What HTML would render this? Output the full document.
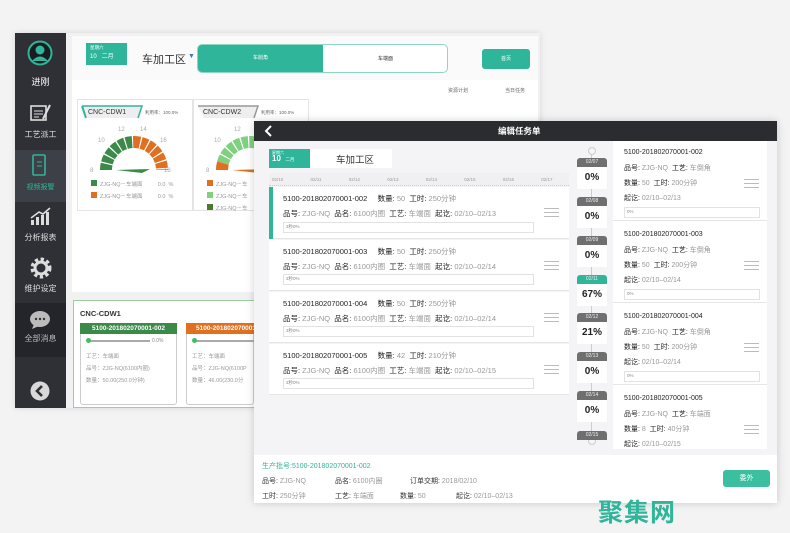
<!DOCTYPE html>
<html><head><meta charset="utf-8">
<style>
*{margin:0;padding:0;box-sizing:border-box}
body{width:790px;height:533px;background:#f3f3f4;font-family:"Liberation Sans","Noto Sans CJK SC",sans-serif;position:relative;overflow:hidden;color:#333}
.a{position:absolute}
.t{position:absolute;white-space:nowrap}
.sb{left:15px;top:33px;width:51px;height:375px;background:#2e3036}
.si{position:absolute;left:0;width:51px;text-align:center;color:#ddd;font-size:8px}
.card{position:absolute;left:269px;width:300px;background:#fff;border-bottom:1px solid #e6e6e6}
.card .l1{position:absolute;left:14px;top:6px;font-size:7.5px;color:#222}
.card .l2{position:absolute;left:14px;top:21px;font-size:7.5px;color:#222}
.g{color:#999}
.bar{position:absolute;border:1px solid #e2e2e2;background:#fff;font-size:4.5px;color:#888;padding:1px 2px}
.menu{position:absolute;width:15px;height:9px;border-top:1px solid #bbb;border-bottom:1px solid #bbb}
.menu:after{content:"";position:absolute;left:0;right:0;top:3px;border-top:1px solid #bbb}
.pill{position:absolute;left:577px;width:30px;height:9px;background:#6f6f6f;color:#eee;font-size:5px;text-align:center;line-height:9px;border-radius:3px 3px 0 0}
.pct{position:absolute;left:577px;width:30px;height:22px;background:#fff;font-size:10px;font-weight:bold;text-align:center;line-height:22px;color:#222}
.ri{position:absolute;left:613px;width:154px;background:#fff;border-bottom:1px solid #e6e6e6;height:78px}
.ri div.t{left:11px;font-size:7px;color:#222}
</style></head><body>

<!-- back panel -->
<div class="a" style="left:15px;top:33px;width:525px;height:375px;background:#f1f1f2;box-shadow:0 0 6px rgba(0,0,0,.12)"></div>
<div class="a sb"></div>
<div class="a" style="left:15px;top:150px;width:51px;height:52px;background:#3d4047"></div>
<div class="a" style="left:15px;top:303px;width:51px;height:54px;background:#23252a"></div>
<svg class="a" style="left:27px;top:40px" width="26" height="26"><circle cx="13" cy="13" r="11.5" fill="#1a1c20" stroke="#2fb59a" stroke-width="2"/><circle cx="13" cy="10" r="4.5" fill="#2fb59a"/><path d="M5 21 Q13 12 21 21" fill="#2fb59a"/></svg>
<div class="si" style="left:15px;top:75px;font-size:9px;color:#fff">进刚</div>
<svg class="a" style="left:30px;top:103px" width="22" height="20"><rect x="1" y="3" width="15" height="14" fill="none" stroke="#ddd" stroke-width="1.6"/><path d="M4 8h9M4 11h9M4 14h5" stroke="#ddd"/><path d="M13 16 L20 2" stroke="#ddd" stroke-width="2"/></svg>
<div class="si" style="left:15px;top:129px">工艺派工</div>
<svg class="a" style="left:32px;top:154px" width="16" height="24"><rect x="1" y="1" width="12" height="20" rx="1" fill="none" stroke="#2fb59a" stroke-width="1.6"/><path d="M5 8h5M5 12h5" stroke="#2fb59a"/></svg>
<div class="si" style="left:15px;top:182px;color:#2fb59a;font-size:7px">视频报警</div>
<svg class="a" style="left:29px;top:207px" width="24" height="20"><path d="M2 18V13h3v5zM7 18V10h3v8zM12 18V8h3v10zM17 18V5h3v13z" fill="#ddd"/><path d="M2 11 L10 5 L14 7 L21 1" stroke="#ddd" stroke-width="1.6" fill="none"/></svg>
<div class="si" style="left:15px;top:232px">分析报表</div>
<svg class="a" style="left:29px;top:256px" width="24" height="24"><circle cx="12" cy="12" r="8" fill="none" stroke="#ddd" stroke-width="5" stroke-dasharray="3 2.3"/><circle cx="12" cy="12" r="6" fill="none" stroke="#ddd" stroke-width="3"/></svg>
<div class="si" style="left:15px;top:283px">维护设定</div>
<svg class="a" style="left:29px;top:310px" width="22" height="20"><ellipse cx="11" cy="9" rx="10" ry="8" fill="#bbb"/><path d="M5 14 L3 19 L10 16z" fill="#bbb"/><circle cx="7" cy="9" r="1.2" fill="#333"/><circle cx="11" cy="9" r="1.2" fill="#333"/><circle cx="15" cy="9" r="1.2" fill="#333"/></svg>
<div class="si" style="left:15px;top:333px;color:#bbb">全部消息</div>
<svg class="a" style="left:30px;top:381px" width="20" height="20"><circle cx="10" cy="10" r="9.5" fill="#d8d8d8"/><path d="M12 5 L7 10 L12 15" stroke="#2e3036" stroke-width="2.6" fill="none"/></svg>

<!-- back top bar -->
<div class="a" style="left:72px;top:36px;width:466px;height:44px;background:#fafafa"></div>
<div class="a" style="left:86px;top:43px;width:41px;height:22px;background:#2fb59a;color:#fff;font-size:4.5px;padding:2px 4px">星期六<br><span style="font-size:6px">10 &nbsp; 二月</span></div>
<div class="t" style="left:142px;top:51px;font-size:11px">车加工区</div>
<div class="t" style="left:188px;top:53px;font-size:7px;color:#3a7bb0">▼</div>
<div class="a" style="left:197px;top:44px;width:251px;height:29px;border:1px solid #8fd5c4;border-radius:5px;background:#fff;overflow:hidden"><div style="width:125px;height:100%;background:#2fb59a;color:#fff;font-size:5px;text-align:center;line-height:27px">车削角</div><div class="t" style="left:180px;top:10px;font-size:5px">车端面</div></div>
<div class="a" style="left:482px;top:49px;width:48px;height:20px;background:#2fb59a;border-radius:3px;color:#fff;font-size:5px;text-align:center;line-height:20px">首页</div>
<div class="a" style="left:72px;top:80px;width:466px;height:212px;background:#fff"></div>
<div class="t" style="left:448px;top:87px;font-size:5px;color:#666">资源计划</div>
<div class="t" style="left:505px;top:87px;font-size:5px;color:#666">当日任务</div>
<!-- gauge cards -->
<div class="a" style="left:77px;top:99px;width:116px;height:112px;border:1px solid #e4e4e4;background:#fff"></div>
<div class="a" style="left:193px;top:99px;width:116px;height:112px;border:1px solid #e4e4e4;background:#fff"></div>
<svg class="a" style="left:80px;top:104px" width="64" height="16"><path d="M2 2 L62 2 L58 14 L8 14z" fill="#eee"/><path d="M2 2 L6 14" stroke="#2fb59a" stroke-width="2"/><path d="M2 2 L62 2 L58 14" stroke="#2fb59a" stroke-width="1.5" fill="none"/></svg>
<div class="t" style="left:88px;top:109px;font-size:7px;color:#333">CNC-CDW1</div>
<div class="t" style="left:145px;top:110px;font-size:4.5px;color:#666">利用率：100.0%</div>
<svg class="a" style="left:196px;top:104px" width="64" height="16"><path d="M2 2 L62 2 L58 14 L8 14z" fill="#eee"/><path d="M2 2 L62 2 L58 14" stroke="#999" stroke-width="1.5" fill="none"/></svg>
<div class="t" style="left:203px;top:109px;font-size:7px;color:#333">CNC-CDW2</div>
<div class="t" style="left:261px;top:110px;font-size:4.5px;color:#666">利用率：100.0%</div>
<svg class="a" style="left:80px;top:118px" width="110" height="60">
<text x="38" y="13" font-size="6" fill="#aaa">12</text><text x="60" y="13" font-size="6" fill="#aaa">14</text><text x="18" y="24" font-size="6" fill="#aaa">10</text><text x="80" y="24" font-size="6" fill="#aaa">16</text><text x="10" y="54" font-size="6" fill="#aaa">8</text><text x="84" y="54" font-size="6" fill="#aaa">18</text>
<path d="M26 52 A28 28 0 0 1 54 24" fill="none" stroke="#3c8a4a" stroke-width="12" stroke-dasharray="6 1.2"/>
<path d="M54 24 A28 28 0 0 1 82 52" fill="none" stroke="#e07020" stroke-width="12" stroke-dasharray="6 1.2"/>
<path d="M36 52 L70 51 L62 55z" fill="#3c8a4a"/>
</svg>
<svg class="a" style="left:196px;top:118px" width="110" height="60">
<text x="38" y="13" font-size="6" fill="#aaa">12</text><text x="18" y="24" font-size="6" fill="#aaa">10</text><text x="10" y="54" font-size="6" fill="#aaa">8</text>
<path d="M26 52 A28 28 0 0 1 82 52" fill="none" stroke="#7fd07f" stroke-width="12" stroke-dasharray="6 1.2"/>
<path d="M26 52 A28 28 0 0 1 27 45" fill="none" stroke="#e07020" stroke-width="12"/>
<path d="M36 52 L70 51 L62 55z" fill="#e07020"/>
</svg>
<div class="a" style="left:91px;top:180px;width:6px;height:6px;background:#3c8a4a"></div><div class="t" style="left:100px;top:180px;font-size:5.5px;color:#999">ZJG-NQ－车端面 &nbsp;&nbsp;&nbsp;&nbsp;&nbsp;&nbsp;&nbsp;&nbsp;&nbsp;0.0 &nbsp;%</div>
<div class="a" style="left:91px;top:192px;width:6px;height:6px;background:#e07020"></div><div class="t" style="left:100px;top:192px;font-size:5.5px;color:#999">ZJG-NQ－车端面 &nbsp;&nbsp;&nbsp;&nbsp;&nbsp;&nbsp;&nbsp;&nbsp;&nbsp;0.0 &nbsp;%</div>
<div class="a" style="left:207px;top:180px;width:6px;height:6px;background:#e07020"></div><div class="t" style="left:216px;top:180px;font-size:5.5px;color:#999">ZJG-NQ－车</div>
<div class="a" style="left:207px;top:192px;width:6px;height:6px;background:#7fd07f"></div><div class="t" style="left:216px;top:192px;font-size:5.5px;color:#999">ZJG-NQ－车</div>
<div class="a" style="left:207px;top:204px;width:6px;height:6px;background:#4a7a2a"></div><div class="t" style="left:216px;top:204px;font-size:5.5px;color:#999">ZJG-NQ－车</div>
<!-- bottom card -->
<div class="a" style="left:73px;top:300px;width:190px;height:108px;border:1px solid #9ccfa0;background:#fff"></div>
<div class="t" style="left:80px;top:309px;font-size:7.5px;font-weight:bold;color:#333">CNC-CDW1</div>
<div class="a" style="left:80px;top:323px;width:97px;height:82px;border:1px solid #ccc;border-radius:3px"></div>
<div class="a" style="left:80px;top:323px;width:97px;height:11px;background:#3c8a4a;color:#fff;font-size:6.5px;font-weight:bold;text-align:center;line-height:11px">5100-201802070001-002</div>
<div class="a" style="left:186px;top:323px;width:68px;height:82px;border:1px solid #ccc;border-radius:3px"></div>
<div class="a" style="left:186px;top:323px;width:68px;height:11px;background:#e07020;color:#fff;font-size:6.5px;font-weight:bold;line-height:11px;padding-left:10px;overflow:hidden;white-space:nowrap">5100-201802070001</div>
<div class="a" style="left:88px;top:340px;width:62px;height:2px;background:#aaa"></div><div class="a" style="left:86px;top:338px;width:5px;height:5px;border-radius:50%;background:#3fc060"></div><div class="t" style="left:152px;top:338px;font-size:5px;color:#888">0.0%</div>
<div class="a" style="left:194px;top:340px;width:60px;height:2px;background:#aaa"></div><div class="a" style="left:192px;top:338px;width:5px;height:5px;border-radius:50%;background:#3fc060"></div>
<div class="t" style="left:86px;top:351px;font-size:5.5px;color:#999;line-height:12px">工艺：车端面<br>品号：ZJG-NQ(6100内圈)<br>数量：50.00(250.0分钟)</div>
<div class="t" style="left:192px;top:351px;font-size:5.5px;color:#999;line-height:12px">工艺：车端面<br>品号：ZJG-NQ(6100P<br>数量：46.00(230.0分</div>

<!-- front panel -->
<div class="a" style="left:254px;top:121px;width:523px;height:382px;background:#f4f4f6;box-shadow:0 0 8px rgba(0,0,0,.18)"></div>
<div class="a" style="left:254px;top:121px;width:523px;height:20px;background:#2b2c30"></div>
<svg class="a" style="left:263px;top:124px" width="10" height="14"><path d="M8 2 L3 7 L8 12" stroke="#fff" stroke-width="2" fill="none"/></svg>
<div class="t" style="left:498px;top:125px;font-size:8.5px;font-weight:bold;color:#fff">编辑任务单</div>
<div class="a" style="left:269px;top:149px;width:41px;height:19px;background:#2fb59a;color:#fff;font-size:4px;padding:1px 3px;line-height:6px">星期六<br><span style="font-size:8px;font-weight:bold">10</span> &nbsp;&nbsp;&nbsp;<span style="font-size:4.5px">二月</span></div>
<div class="a" style="left:310px;top:149px;width:82px;height:19px;background:#fff"></div>
<div class="t" style="left:336px;top:152px;font-size:9.5px">车加工区</div>
<div class="a" style="left:269px;top:173px;width:300px;height:13px;background:#f0f0f2;border-bottom:1px dotted #ccc"></div>
<div class="t" style="left:272px;top:177px;font-size:4.5px;color:#999;word-spacing:26px">02/10 02/11 02/12 02/13 02/14 02/15 02/16 02/17</div>

<div class="card" style="top:187px;height:52px"><div class="a" style="left:0;top:0;width:4px;height:52px;background:#2fb59a"></div><div class="l1">5100-201802070001-002 &nbsp;&nbsp;&nbsp;&nbsp;数量: <span class="g">50</span> &nbsp;工时: <span class="g">250分钟</span></div><div class="l2">品号: <span class="g">ZJG-NQ</span> &nbsp;品名: <span class="g">6100内圈</span> &nbsp;工艺: <span class="g">车端面</span> &nbsp;起讫: <span class="g">02/10–02/13</span></div><div class="bar" style="left:14px;top:35px;width:251px;height:11px">3秒0%</div><div class="menu" style="left:275px;top:21px"></div></div>
<div class="card" style="top:240px;height:51px"><div class="l1">5100-201802070001-003 &nbsp;&nbsp;&nbsp;&nbsp;数量: <span class="g">50</span> &nbsp;工时: <span class="g">250分钟</span></div><div class="l2">品号: <span class="g">ZJG-NQ</span> &nbsp;品名: <span class="g">6100内圈</span> &nbsp;工艺: <span class="g">车端面</span> &nbsp;起讫: <span class="g">02/10–02/14</span></div><div class="bar" style="left:14px;top:34px;width:251px;height:11px">3秒0%</div><div class="menu" style="left:275px;top:21px"></div></div>
<div class="card" style="top:292px;height:51px"><div class="l1">5100-201802070001-004 &nbsp;&nbsp;&nbsp;&nbsp;数量: <span class="g">50</span> &nbsp;工时: <span class="g">250分钟</span></div><div class="l2">品号: <span class="g">ZJG-NQ</span> &nbsp;品名: <span class="g">6100内圈</span> &nbsp;工艺: <span class="g">车端面</span> &nbsp;起讫: <span class="g">02/10–02/14</span></div><div class="bar" style="left:14px;top:34px;width:251px;height:11px">3秒0%</div><div class="menu" style="left:275px;top:21px"></div></div>
<div class="card" style="top:344px;height:51px"><div class="l1">5100-201802070001-005 &nbsp;&nbsp;&nbsp;&nbsp;数量: <span class="g">42</span> &nbsp;工时: <span class="g">210分钟</span></div><div class="l2">品号: <span class="g">ZJG-NQ</span> &nbsp;品名: <span class="g">6100内圈</span> &nbsp;工艺: <span class="g">车端面</span> &nbsp;起讫: <span class="g">02/10–02/15</span></div><div class="bar" style="left:14px;top:34px;width:251px;height:11px">3秒0%</div><div class="menu" style="left:275px;top:21px"></div></div>

<!-- timeline -->
<div class="a" style="left:591px;top:152px;width:1px;height:290px;background:#ccc"></div>
<div class="a" style="left:588px;top:147px;width:8px;height:8px;border-radius:50%;border:1px solid #ccc;background:#f4f4f6"></div>
<div class="a" style="left:588px;top:437px;width:8px;height:8px;border-radius:50%;border:1px solid #ccc;background:#f4f4f6"></div>
<div class="pct" style="top:167px">0%</div><div class="pill" style="top:158px">02/07</div>
<div class="pct" style="top:206px">0%</div><div class="pill" style="top:197px">02/08</div>
<div class="pct" style="top:245px">0%</div><div class="pill" style="top:236px">02/09</div>
<div class="pct" style="top:284px">67%</div><div class="pill" style="top:275px;background:#2fb59a">02/11</div>
<div class="pct" style="top:322px">21%</div><div class="pill" style="top:313px">02/12</div>
<div class="pct" style="top:361px">0%</div><div class="pill" style="top:352px">02/13</div>
<div class="pct" style="top:400px">0%</div><div class="pill" style="top:391px">02/14</div>
<div class="pill" style="top:431px">02/15</div>

<!-- right list -->
<div class="a" style="left:613px;top:141px;width:154px;height:308px;background:#fff"></div>
<div class="ri" style="top:143px"><div class="t" style="top:6px">5100-201802070001-002</div><div class="t" style="top:20px">品号: <span class="g">ZJG-NQ</span> &nbsp;工艺: <span class="g">车倒角</span></div><div class="t" style="top:35px">数量: <span class="g">50</span> &nbsp;工时: <span class="g">200分钟</span></div><div class="t" style="top:50px">起讫: <span class="g">02/10–02/13</span></div><div class="bar" style="left:11px;top:64px;width:136px;height:11px">0%</div><div class="menu" style="left:131px;top:36px"></div></div>
<div class="ri" style="top:225px"><div class="t" style="top:6px">5100-201802070001-003</div><div class="t" style="top:20px">品号: <span class="g">ZJG-NQ</span> &nbsp;工艺: <span class="g">车倒角</span></div><div class="t" style="top:35px">数量: <span class="g">50</span> &nbsp;工时: <span class="g">200分钟</span></div><div class="t" style="top:50px">起讫: <span class="g">02/10–02/14</span></div><div class="bar" style="left:11px;top:64px;width:136px;height:11px">0%</div><div class="menu" style="left:131px;top:36px"></div></div>
<div class="ri" style="top:307px"><div class="t" style="top:6px">5100-201802070001-004</div><div class="t" style="top:20px">品号: <span class="g">ZJG-NQ</span> &nbsp;工艺: <span class="g">车倒角</span></div><div class="t" style="top:35px">数量: <span class="g">50</span> &nbsp;工时: <span class="g">200分钟</span></div><div class="t" style="top:50px">起讫: <span class="g">02/10–02/14</span></div><div class="bar" style="left:11px;top:64px;width:136px;height:11px">0%</div><div class="menu" style="left:131px;top:36px"></div></div>
<div class="ri" style="top:389px;height:60px;border:none"><div class="t" style="top:6px">5100-201802070001-005</div><div class="t" style="top:20px">品号: <span class="g">ZJG-NQ</span> &nbsp;工艺: <span class="g">车端面</span></div><div class="t" style="top:35px">数量: <span class="g">8</span> &nbsp;工时: <span class="g">40分钟</span></div><div class="t" style="top:50px">起讫: <span class="g">02/10–02/15</span></div><div class="menu" style="left:131px;top:36px"></div></div>

<!-- footer -->
<div class="a" style="left:254px;top:455px;width:523px;height:48px;background:#fff"></div>
<div class="t" style="left:262px;top:461px;font-size:7px;color:#2fb59a">生产批号:5100-201802070001-002</div>
<div class="t" style="left:262px;top:476px;font-size:7px;color:#333">品号: <span class="g">ZJG-NQ</span></div>
<div class="t" style="left:335px;top:476px;font-size:7px;color:#333">品名: <span class="g">6100内圈</span></div>
<div class="t" style="left:410px;top:476px;font-size:7px;color:#333">订单交期: <span class="g">2018/02/10</span></div>
<div class="t" style="left:262px;top:491px;font-size:7px;color:#333">工时: <span class="g">250分钟</span></div>
<div class="t" style="left:335px;top:491px;font-size:7px;color:#333">工艺: <span class="g">车端面</span></div>
<div class="t" style="left:400px;top:491px;font-size:7px;color:#333">数量: <span class="g">50</span></div>
<div class="t" style="left:456px;top:491px;font-size:7px;color:#333">起讫: <span class="g">02/10–02/13</span></div>
<div class="a" style="left:723px;top:470px;width:47px;height:17px;background:#3cbf9f;border-radius:3px;color:#fff;font-size:7px;text-align:center;line-height:17px">委外</div>

<div class="t" style="left:598px;top:497px;font-size:25px;font-weight:bold;color:#2fb59a;letter-spacing:1px;font-family:'Noto Sans CJK SC',sans-serif;line-height:28px">聚集网</div>
</body></html>
